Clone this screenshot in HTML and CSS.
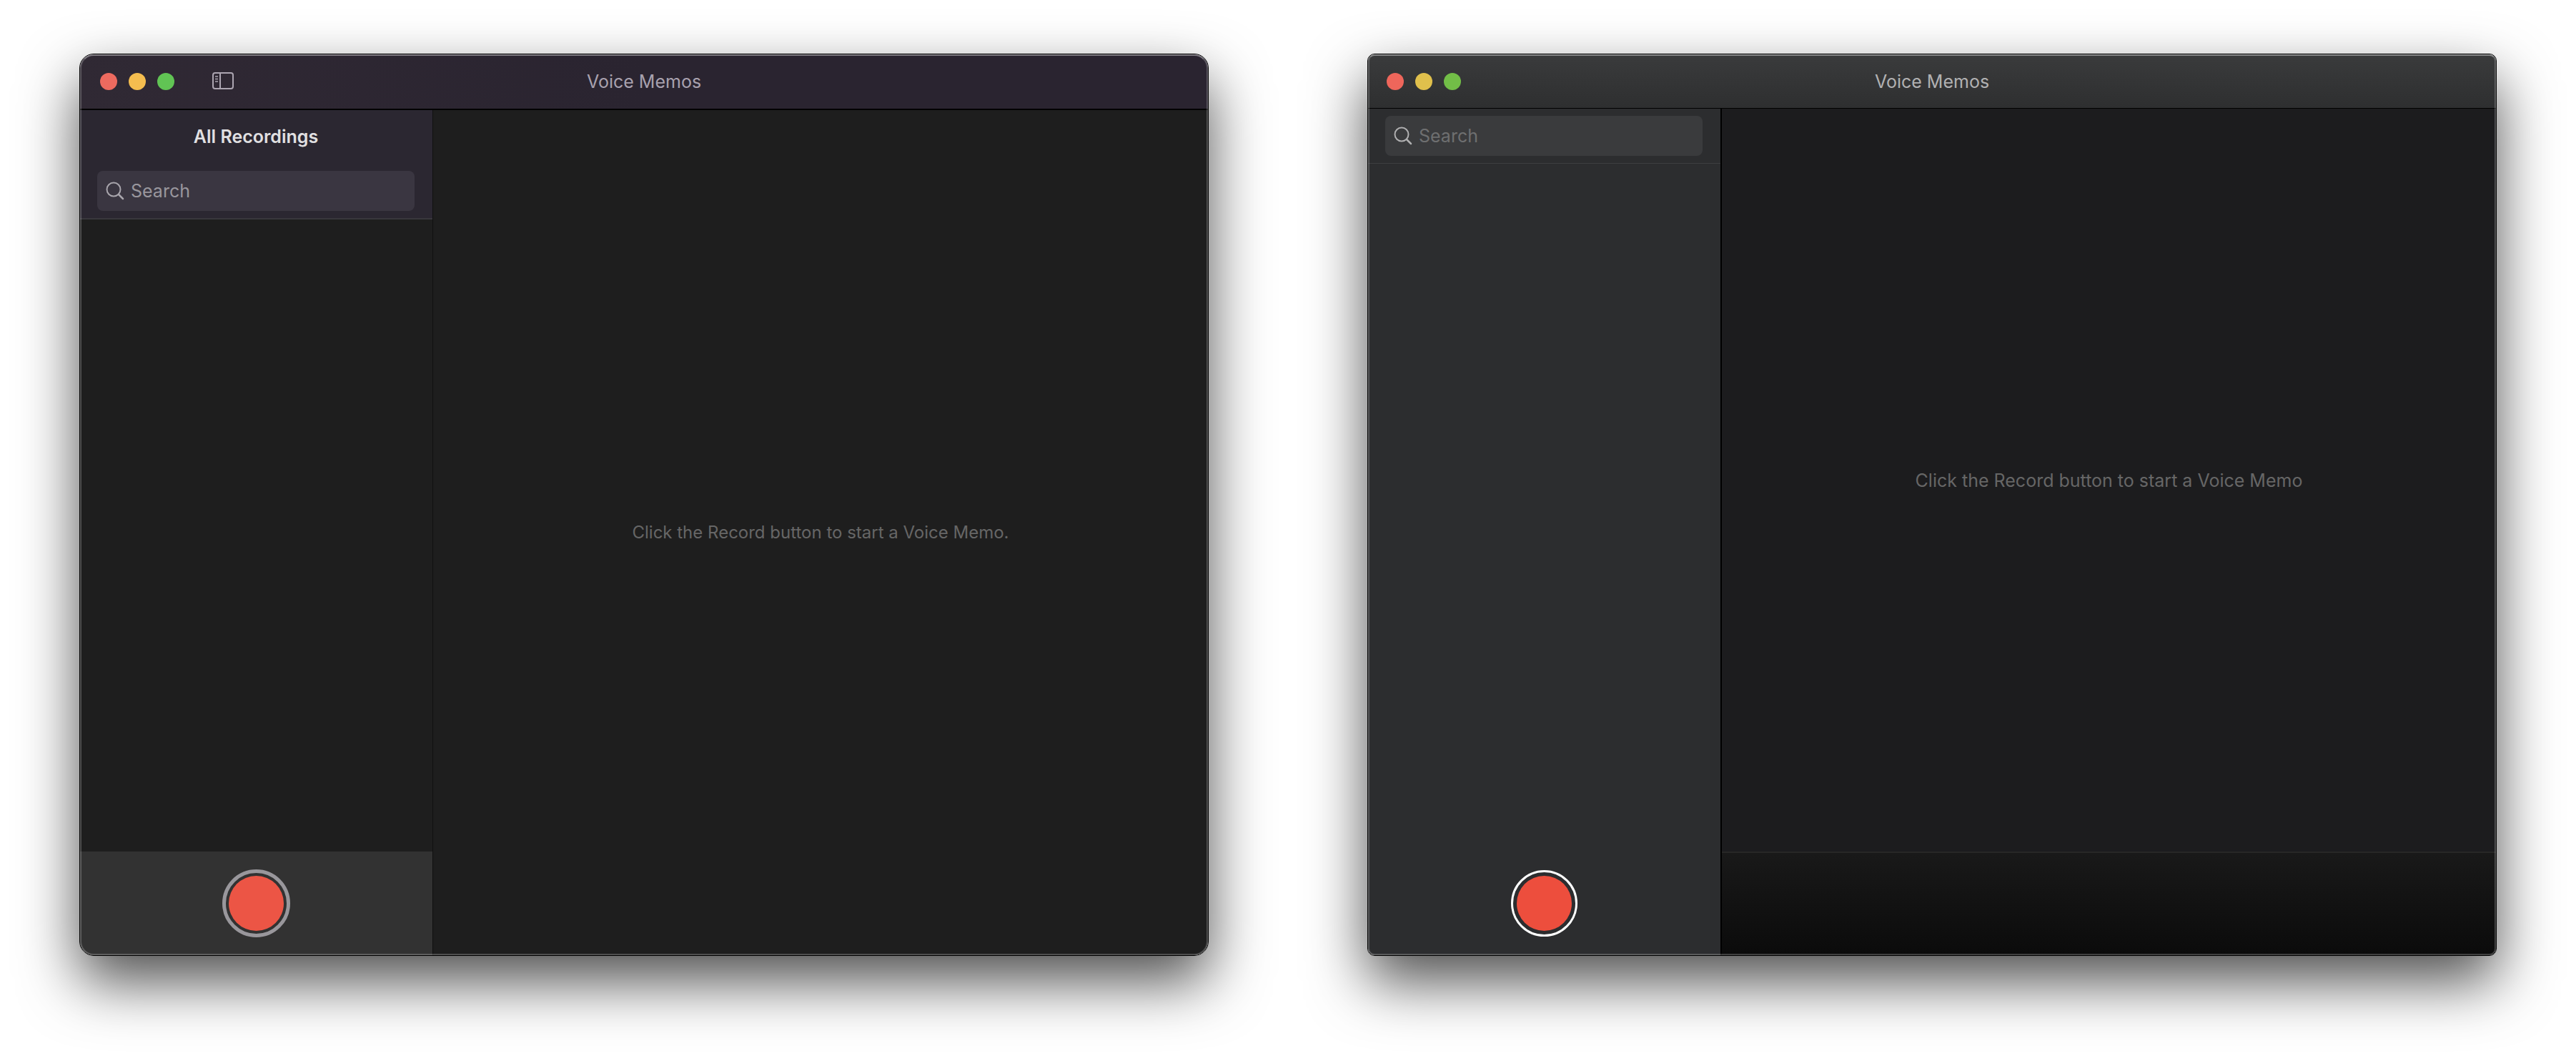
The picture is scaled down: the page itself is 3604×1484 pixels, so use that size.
FILE: index.html
```html
<!DOCTYPE html>
<html lang="en">
<head>
<meta charset="utf-8">
<title>Voice Memos</title>
<link rel="stylesheet" href="styles.css">
</head>
<body>
<main class="stage">
  <section class="window window-new">
    <header class="titlebar">
      <div class="lights">
        <button class="light close" aria-label="Close"></button>
        <button class="light minimize" aria-label="Minimize"></button>
        <button class="light zoom" aria-label="Zoom"></button>
      </div>
      <button class="sidebar-toggle" aria-label="Toggle sidebar">
        <svg width="30" height="24" viewBox="0 0 30 24" fill="none" stroke="currentColor" stroke-width="2">
          <rect x="1" y="1" width="28" height="22" rx="3"/>
          <path d="M11 1v22"/>
          <path d="M4 6h4M4 9.500h4M4 13h4" stroke-width="1.300"/>
        </svg>
      </button>
      <h1 class="title">Voice Memos</h1>
    </header>
    <div class="body">
      <aside class="sidebar">
        <div class="sidebar-head">
          <h2 class="folder">All Recordings</h2>
          <label class="search">
            <svg class="lens" width="26" height="26" viewBox="0 0 26 26" fill="none" stroke="currentColor" stroke-width="2" stroke-linecap="round"><circle cx="11" cy="11" r="9.500"/><path d="M18 18L24 24" stroke-width="2.500"/></svg>
            <input type="search" placeholder="Search" aria-label="Search">
          </label>
        </div>
        <div class="recordings"></div>
        <footer class="record-bar"><button class="record" aria-label="Record"></button></footer>
      </aside>
      <section class="detail">
        <p class="message">Click the Record button to start a Voice Memo.</p>
      </section>
    </div>
  </section>

  <section class="window window-old">
    <header class="titlebar">
      <div class="lights">
        <button class="light close" aria-label="Close"></button>
        <button class="light minimize" aria-label="Minimize"></button>
        <button class="light zoom" aria-label="Zoom"></button>
      </div>
      <h1 class="title">Voice Memos</h1>
    </header>
    <div class="body">
      <aside class="sidebar">
        <div class="sidebar-head">
          <label class="search">
            <svg class="lens" width="26" height="26" viewBox="0 0 26 26" fill="none" stroke="currentColor" stroke-width="2" stroke-linecap="round"><circle cx="11" cy="11" r="9.500"/><path d="M18 18L24 24" stroke-width="2.500"/></svg>
            <input type="search" placeholder="Search" aria-label="Search">
          </label>
        </div>
        <div class="recordings"></div>
        <footer class="record-bar"><button class="record" aria-label="Record"></button></footer>
      </aside>
      <section class="detail">
        <p class="message">Click the Record button to start a Voice Memo</p>
        <div class="player"></div>
      </section>
    </div>
  </section>
</main>
</body>
</html>
```
FILE: styles.css
```css
* {
  box-sizing: border-box;
}

body {
  margin: 0;
  background: #fff;
  font-family: Inter, "Liberation Sans", sans-serif;
  font-size: 25px;
  line-height: 32px;
}

h1, h2, p {
  margin: 0;
}

button {
  padding: 0;
  border: 0;
  background: none;
}

.stage {
  display: grid;
  grid-template-columns: 1fr 1fr;
  gap: 222px;
  min-height: 100vh;
  padding: 75px 111px 147px;
}

.window {
  position: relative;
  display: flex;
  flex-direction: column;
  overflow: hidden;
  border: 1px solid #000;
  border-radius: 20px;
  box-shadow: 0 36px 82px rgba(0, 0, 0, 0.69);
}

.window-old {
  border-radius: 10px;
}

/* Light rim drawn over the window's content */
.window::after {
  content: "";
  position: absolute;
  inset: 0;
  border: 2px solid rgba(255, 255, 255, 0.22);
  border-top-color: rgba(255, 255, 255, 0.4);
  border-radius: 19px;
  pointer-events: none;
}

.window-old::after {
  border-radius: 9px;
}

.titlebar {
  display: grid;
  grid-template-columns: 1fr auto 1fr;
  align-items: center;
  height: 78px;
  padding: 0 28px;
  border-bottom: 2px solid #000;
  background: linear-gradient(90deg, #302934, #2a2430 50%);
  color: #a8a1ae;
}

.window-old .titlebar {
  height: 76px;
  padding: 0 26px;
  border-bottom-width: 1px;
  background: linear-gradient(#3a3b3c, #2e2f30);
  color: #b1b1b2;
}

.lights {
  grid-area: 1 / 1;
  display: flex;
  gap: 16px;
}

.light {
  width: 24px;
  height: 24px;
  border-radius: 50%;
}

.close { background: #ed6a5f; }
.minimize { background: #f5bd4f; }
.zoom { background: #61c454; }
.window-old .close { background: #ee665b; }
.window-old .minimize { background: #e0c04c; }
.window-old .zoom { background: #72be47; }

.sidebar-toggle {
  grid-area: 1 / 1;
  height: 24px;
  margin-left: 157px;
  margin-bottom: 3px;
  justify-self: start;
  color: #aca5b1;
}

.sidebar-toggle svg {
  display: block;
}

.title {
  grid-area: 1 / 2;
  font-size: 25px;
  font-weight: 400;
}

.body {
  flex: 1;
  display: grid;
  grid-template-columns: 494px 1fr;
}

.window-old .body {
  grid-template-columns: 495px 1fr;
}

.sidebar {
  display: flex;
  flex-direction: column;
  border-right: 1px solid #101010;
  background: #1e1e1e;
}

.window-old .sidebar {
  border-right: 2px solid #000;
  background: #2c2d2f;
}

.sidebar-head {
  display: flex;
  flex-direction: column;
  gap: 32px;
  padding: 21px 25px 10px 24px;
  border-bottom: 2px solid #39373c;
  background: #2b2731;
}

.window-old .sidebar-head {
  padding-top: 10px;
  border-bottom: 1px solid #3d3e40;
  background: none;
}

.folder {
  color: #e1e0e2;
  font-size: 25px;
  font-weight: 600;
  text-align: center;
}

.search {
  display: flex;
  align-items: center;
  gap: 9px;
  height: 56px;
  padding: 0 12px;
  border-radius: 8px;
  background: #3a3641;
  color: #a9a6ad;
}

.window-old .search {
  background: #3a3b3d;
  color: #b0b0b1;
}

.lens {
  flex: none;
}

.search input {
  flex: 1;
  min-width: 0;
  padding: 0;
  border: 0;
  outline: 0;
  background: none;
  color: #e1e0e2;
  font: inherit;
  appearance: none;
}

.search input::placeholder {
  color: #99969d;
  opacity: 1;
}

.window-old .search input::placeholder {
  color: #6e6f70;
}

.recordings {
  flex: 1;
}

.record-bar {
  display: grid;
  place-items: center;
  height: 145px;
  background: #323232;
}

.window-old .record-bar {
  background: none;
}

.record {
  width: 95px;
  height: 95px;
  padding: 4px;
  border: 5px solid #99979c;
  border-radius: 50%;
  background: #ec5545 content-box;
}

.window-old .record {
  width: 93px;
  height: 93px;
  padding: 5px;
  border: 3px solid #fff;
  background-color: #ed4e3d;
}

.detail {
  display: flex;
  flex-direction: column;
  background: #1e1e1e;
}

.window-old .detail {
  background: #1c1c1e;
}

.message {
  flex: 1;
  display: grid;
  place-items: center;
  color: #666;
  font-size: 24px;
}

.window-old .message {
  font-size: 25px;
}

.player {
  height: 145px;
  border-top: 2px solid #272727;
  background: linear-gradient(#191919, #0b0b0b);
}
```
